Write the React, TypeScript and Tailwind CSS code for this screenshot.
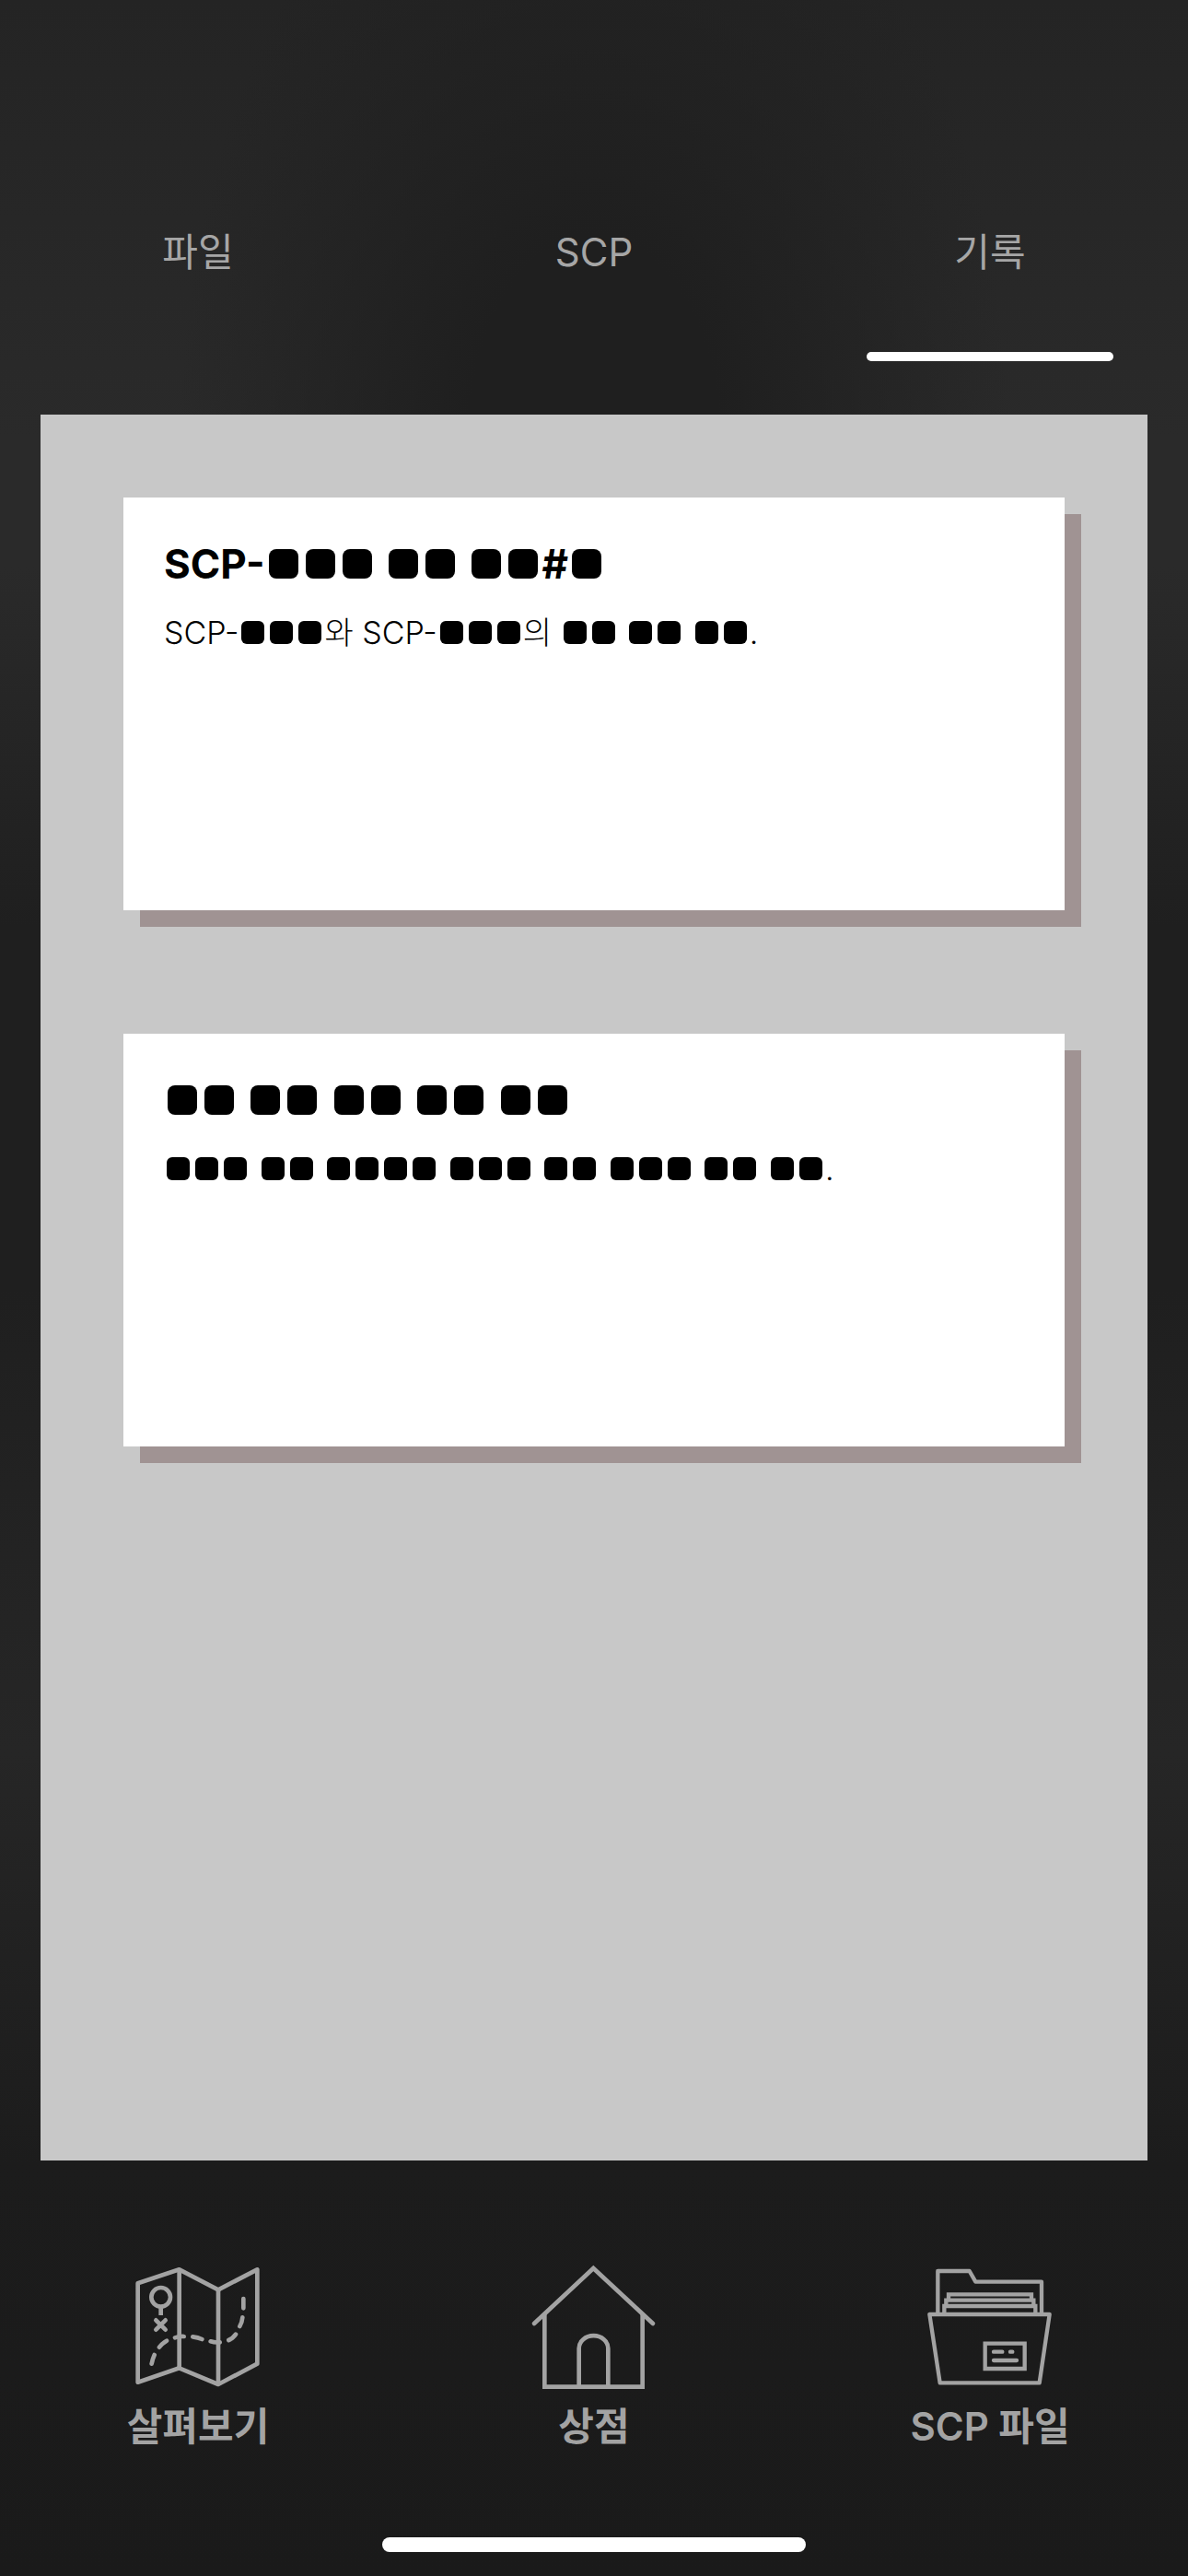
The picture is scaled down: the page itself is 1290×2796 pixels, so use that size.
import React from "react";

const FONT = "font-['Inter','Noto_Sans_CJK_KR',sans-serif]";

/** Renders a string in which every ■ is drawn as a rounded censor block. */
function Redacted({ text, large = false }: { text: string; large?: boolean }) {
  return (
    <>
      {text.split(/(■)/).map((part, i) =>
        part === "■" ? (
          <span
            key={i}
            className={
              large
                ? "mx-1 inline-block size-8 overflow-hidden rounded-lg bg-black text-center text-base leading-8"
                : "mx-[3px] inline-block size-[25px] overflow-hidden rounded-md bg-black text-center text-xs leading-[25px]"
            }
          >
            ■
          </span>
        ) : (
          <React.Fragment key={i}>{part}</React.Fragment>
        )
      )}
    </>
  );
}

const iconProps = {
  className: "size-[138px]",
  fill: "none",
  stroke: "currentColor",
  strokeWidth: 14,
  strokeLinejoin: "round" as const,
  "aria-hidden": true,
};

function MapIcon() {
  return (
    <svg viewBox="78 54 414 414" {...iconProps}>
      <path d="M89 115 224 70 351 136 478 70V377L351 444 224 391 89 437Z" />
      <path d="M224 70V391M351 136V444" />
      <circle cx="164" cy="160" r="31" />
      <path d="M164 191V219" />
      <g strokeLinecap="round">
        <path d="M148 235 179 266M179 235 148 266" />
        <path
          d="M134 377Q137 361 143 348M159 323Q169 310 183 302M210 292Q224 287 239 288M268 289Q285 291 298 297M326 304Q341 309 356 307M385 300Q399 294 408 281M421 255Q429 240 430 226M433 196V165"
        />
      </g>
    </svg>
  );
}

function HomeIcon() {
  return (
    <svg viewBox="78 54 414 414" {...iconProps} strokeLinejoin="miter">
      <path d="M90 246 283 66 477 246" strokeLinecap="round" />
      <path d="M124 214V452H443V214" />
      <path d="M236 452V327A47 41 0 0 1 331 327V452" />
    </svg>
  );
}

function FolderIcon() {
  return (
    <svg viewBox="108 54 414 414" {...iconProps} strokeWidth={13}>
      <path d="M145 216V75H248L268 110H483V216" />
      <path d="M118 216H509L476 439H152Z" />
      <g strokeLinejoin="miter">
        <path d="M180 168V151H450V168M172 188V170H457V188M166 212V189H463V212" />
        <path d="M299 311H428V393H299Z" />
      </g>
      <path d="M327 338H355M381 338H388M327 366H402" strokeLinecap="round" />
    </svg>
  );
}

const tabs = [
  { label: "파일", active: false },
  { label: "SCP", active: false },
  { label: "기록", active: true },
];

const records = [
  { title: "SCP-■■■ ■■ ■■#■", body: "SCP-■■■와 SCP-■■■의 ■■ ■■ ■■." },
  { title: "■■ ■■ ■■ ■■ ■■", body: "■■■ ■■ ■■■■ ■■■ ■■ ■■■ ■■ ■■." },
];

const navItems = [
  { label: "살펴보기", Icon: MapIcon },
  { label: "상점", Icon: HomeIcon },
  { label: "SCP 파일", Icon: FolderIcon },
];

export default function App() {
  return (
    <div
      className={`${FONT} flex min-h-screen flex-col bg-[radial-gradient(ellipse_35%_26%_at_50%_17%,#1f1f1f_30%,transparent),linear-gradient(#242424,#2a2a2a_17%,#2a2a2a_22%,#1f1f1f_36%,#1f1f1f_50%,#262626_68%,#1c1c1c_84%,#1a1a1a)]`}
    >
      <header className="pt-[244px] pb-[58px]">
        <nav aria-label="문서 종류" className="grid grid-cols-3">
          {tabs.map((tab) => (
            <button
              key={tab.label}
              type="button"
              aria-current={tab.active ? "page" : undefined}
              className="flex flex-col items-center gap-[78px] text-[42px] leading-[60px] text-[#a6a6a6]"
            >
              {tab.label}
              <span className={tab.active ? "h-[10px] w-5/8 rounded-full bg-white" : "h-[10px] w-5/8"} />
            </button>
          ))}
        </nav>
      </header>

      <main className="mx-11 flex grow flex-col gap-[134px] bg-[#c8c8c8] px-[90px] pt-[90px]">
        {records.map((record) => (
          <article
            key={record.title}
            className="min-h-[448px] bg-white px-11 pt-11 text-black shadow-[18px_18px_0_0_#a09393]"
          >
            <h2 className="text-[44px] leading-[56px] font-bold">
              <Redacted text={record.title} large />
            </h2>
            <p className="mt-5 text-[34px] leading-[54px] font-light">
              <Redacted text={record.body} />
            </p>
          </article>
        ))}
      </main>

      <footer className="flex flex-col items-center pt-[113px] pb-[26px]">
        <nav aria-label="메인 메뉴" className="grid w-full grid-cols-3">
          {navItems.map(({ label, Icon }) => (
            <button
              key={label}
              type="button"
              className="flex flex-col items-center gap-[14px] text-[42px] leading-[48px] font-semibold text-[#a3a3a3]"
            >
              <Icon />
              {label}
            </button>
          ))}
        </nav>
        <div className="mt-24 h-4 w-[460px] rounded-full bg-white" />
      </footer>
    </div>
  );
}
